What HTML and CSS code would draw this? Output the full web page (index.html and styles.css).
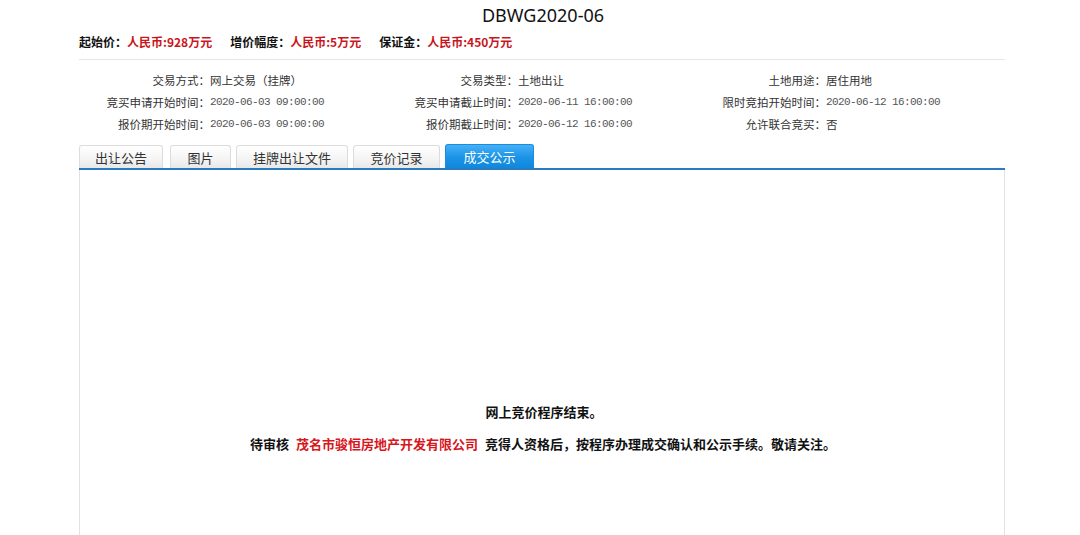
FILE: index.html
```html
<!DOCTYPE html>
<html lang="zh-CN">
<head>
<meta charset="utf-8">
<title>DBWG2020-06</title>
<link rel="stylesheet" href="styles.css">
</head>
<body>
<div class="page">
  <h1 class="title">DBWG2020-06</h1>
  <div class="prices">
    <span class="pitem">起始价：<em>人民币:928万元</em></span>
    <span class="pitem">增价幅度：<em>人民币:5万元</em></span>
    <span class="pitem">保证金：<em>人民币:450万元</em></span>
  </div>
  <div class="info">
    <div class="cell"><span class="lab">交易方式：</span><span class="val">网上交易（挂牌）</span></div>
    <div class="cell"><span class="lab">交易类型：</span><span class="val">土地出让</span></div>
    <div class="cell"><span class="lab">土地用途：</span><span class="val">居住用地</span></div>
    <div class="cell"><span class="lab">竞买申请开始时间：</span><span class="val num">2020-06-03 09:00:00</span></div>
    <div class="cell"><span class="lab">竞买申请截止时间：</span><span class="val num">2020-06-11 16:00:00</span></div>
    <div class="cell"><span class="lab">限时竞拍开始时间：</span><span class="val num">2020-06-12 16:00:00</span></div>
    <div class="cell"><span class="lab">报价期开始时间：</span><span class="val num">2020-06-03 09:00:00</span></div>
    <div class="cell"><span class="lab">报价期截止时间：</span><span class="val num">2020-06-12 16:00:00</span></div>
    <div class="cell"><span class="lab">允许联合竞买：</span><span class="val">否</span></div>
  </div>
  <div class="tabs">
    <div class="tab t1">出让公告</div>
    <div class="tab t2">图片</div>
    <div class="tab t3">挂牌出让文件</div>
    <div class="tab t4">竞价记录</div>
    <div class="tab t5 active">成交公示</div>
  </div>
  <div class="panel">
    <p class="line1">网上竞价程序结束。</p>
    <p class="line2">待审核<span class="co">茂名市骏恒房地产开发有限公司</span>竞得人资格后，按程序办理成交确认和公示手续。敬请关注。</p>
  </div>
</div>
</body>
</html>
```
FILE: styles.css
```css
html, body {
  margin: 0;
  padding: 0;
  background: #fff;
}
body {
  font-family: "Noto Sans CJK SC", "Liberation Sans", sans-serif;
  color: #222;
  height: 535px;
  overflow: hidden;
}
.page {
  margin-left: 79px;
  width: 926px;
  display: flex;
  flex-direction: column;
  height: 535px;
}
.title {
  margin: 0;
  height: 30px;
  line-height: 30px;
  font-family: "Noto Sans", "Liberation Sans", sans-serif;
  font-weight: normal;
  font-size: 18px;
  color: #111;
  text-align: center;
  padding-left: 2px;
}
.prices {
  display: flex;
  line-height: 24px;
  font-size: 12px;
  font-weight: bold;
  color: #111;
  padding-bottom: 5px;
  border-bottom: 1px solid #e6e6e6;
}
.pitem {
  margin-right: 18px;
}
.prices em {
  font-style: normal;
  color: #c8161d;
}
.info {
  display: grid;
  grid-template-columns: 308px 308px 308px;
  grid-auto-rows: 22px;
  padding-top: 9px;
  font-size: 11.5px;
  color: #333;
}
.cell {
  display: flex;
  align-items: center;
}
.lab {
  width: 131px;
  text-align: right;
  white-space: nowrap;
  flex: none;
}
.val {
  white-space: nowrap;
}
.num {
  font-family: "Liberation Mono", monospace;
  font-size: 11px;
  letter-spacing: -0.6px;
  color: #555;
}
.tabs {
  display: flex;
  margin-top: 9px;
  height: 24px;
  border-bottom: 2px solid #2a7bbf;
}
.tab {
  height: 23px;
  margin-top: 1px;
  line-height: 23px;
  text-align: center;
  font-size: 13px;
  color: #333;
  box-sizing: border-box;
  border: 1px solid #dcdcdc;
  border-bottom: none;
  border-radius: 3px 3px 0 0;
  background: linear-gradient(#ffffff, #f4f4f4 60%, #e8e8e8);
  margin-right: 6px;
}
.t1 { width: 84px; margin-right: 7px; }
.t2 { width: 61px; margin-right: 5px; }
.t3 { width: 112px; margin-right: 5px; }
.t4 { width: 87px; margin-right: 5px; }
.t5 { width: 89px; }
.tab.active {
  height: 24px;
  margin-top: 0;
  line-height: 24px;
  color: #fff;
  border-color: #1a8de0;
  background: linear-gradient(#45b0f6, #1b93e6 55%, #0f87dc);
}
.panel {
  flex: 1;
  border-left: 1px solid #e2e2e2;
  border-right: 1px solid #e2e2e2;
  text-align: center;
  padding-top: 232px;
  font-size: 13px;
  font-weight: bold;
  color: #111;
}
.panel p {
  margin: 0;
  line-height: 20px;
}
.line1 {
  padding-left: 4px;
}
.line2 {
  margin-top: 12px !important;
  padding-left: 2px;
}
.co {
  color: #d7161d;
  margin: 0 7px;
}
```
